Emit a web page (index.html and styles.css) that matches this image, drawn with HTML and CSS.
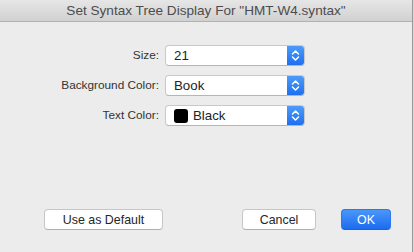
FILE: index.html
```html
<!DOCTYPE html>
<html lang="en">
<head>
    <meta charset="UTF-8">
    <title>Set Syntax Tree Display</title>
    <link rel="stylesheet" href="styles.css">
</head>
<body>
    <div class="window">
        <div class="titlebar">Set Syntax Tree Display For "HMT-W4.syntax"</div>
        <div class="content">
            <div class="form">
                <label>Size:</label>
                <div class="popup">
                    <span class="value">21</span>
                    <span class="arrows">
                        <svg width="9" height="13" viewBox="0 0 9 13"><path d="M1.5 5 L4.5 2 L7.5 5 M1.5 8 L4.5 11 L7.5 8" fill="none" stroke="#fff" stroke-width="1.5" stroke-linecap="round" stroke-linejoin="round"/></svg>
                    </span>
                </div>
                <label>Background Color:</label>
                <div class="popup">
                    <span class="value">Book</span>
                    <span class="arrows">
                        <svg width="9" height="13" viewBox="0 0 9 13"><path d="M1.5 5 L4.5 2 L7.5 5 M1.5 8 L4.5 11 L7.5 8" fill="none" stroke="#fff" stroke-width="1.5" stroke-linecap="round" stroke-linejoin="round"/></svg>
                    </span>
                </div>
                <label>Text Color:</label>
                <div class="popup">
                    <span class="value"><span class="swatch"></span>Black</span>
                    <span class="arrows">
                        <svg width="9" height="13" viewBox="0 0 9 13"><path d="M1.5 5 L4.5 2 L7.5 5 M1.5 8 L4.5 11 L7.5 8" fill="none" stroke="#fff" stroke-width="1.5" stroke-linecap="round" stroke-linejoin="round"/></svg>
                    </span>
                </div>
            </div>
            <div class="buttons">
                <button class="btn default-btn">Use as Default</button>
                <div class="right-buttons">
                    <button class="btn">Cancel</button>
                    <button class="btn ok">OK</button>
                </div>
            </div>
        </div>
    </div>
</body>
</html>
```

FILE: styles.css
```css
body {
    margin: 0;
    width: 414px;
    height: 252px;
    overflow: hidden;
    background-color: #d6d6d6;
    font-family: "Liberation Sans", Arial, sans-serif;
    font-size: 13px;
    color: #262626;
}

.window {
    width: 413px;
    height: 252px;
    background-color: #ececec;
    border-right: 1px solid #9a9a9a;
    box-sizing: border-box;
    display: flex;
    flex-direction: column;
}

.titlebar {
    height: 21px;
    line-height: 21px;
    text-align: center;
    background: linear-gradient(#e6e6e6, #d1d1d1);
    border-bottom: 1px solid #b1b1b1;
    color: #4d4d4d;
    font-size: 13.6px;
    flex-shrink: 0;
}

.content {
    flex: 1;
    display: flex;
    flex-direction: column;
}

.form {
    display: grid;
    grid-template-columns: 159px 140px;
    column-gap: 6px;
    row-gap: 9px;
    padding-top: 23px;
}

.form label {
    text-align: right;
    line-height: 21px;
    font-size: 11.8px;
    color: #333;
}

.popup {
    height: 21px;
    box-sizing: border-box;
    background-color: #fff;
    border: 1px solid #c9c9c9;
    border-bottom-color: #b5b5b5;
    border-radius: 4px;
    display: flex;
    align-items: stretch;
    overflow: hidden;
}

.popup .value {
    flex: 1;
    display: flex;
    align-items: center;
    padding-left: 8px;
    font-size: 13.3px;
    color: #222;
}

.swatch {
    width: 14px;
    height: 14px;
    background-color: #000;
    border-radius: 3px;
    margin-right: 5px;
}

.arrows {
    width: 17px;
    background: linear-gradient(#4c9bfa, #1f6ff0);
    display: flex;
    align-items: center;
    justify-content: center;
}

.buttons {
    margin-top: auto;
    margin-bottom: 22px;
    display: flex;
    justify-content: space-between;
    padding: 0 21px 0 44px;
}

.right-buttons {
    display: flex;
    gap: 25px;
}

.btn {
    font-family: "Liberation Sans", Arial, sans-serif;
    font-size: 12.4px;
    height: 21px;
    padding: 0;
    background-color: #fff;
    color: #262626;
    border: 1px solid #c6c6c6;
    border-bottom-color: #afafaf;
    border-radius: 4px;
}

.default-btn {
    width: 119px;
}

.right-buttons .btn {
    width: 74px;
}

.right-buttons .ok {
    width: 50px;
    color: #fff;
    background: linear-gradient(#4a97f8, #1b6cf0);
    border-color: #2a78ef;
    border-bottom-color: #1f62d8;
}
```
